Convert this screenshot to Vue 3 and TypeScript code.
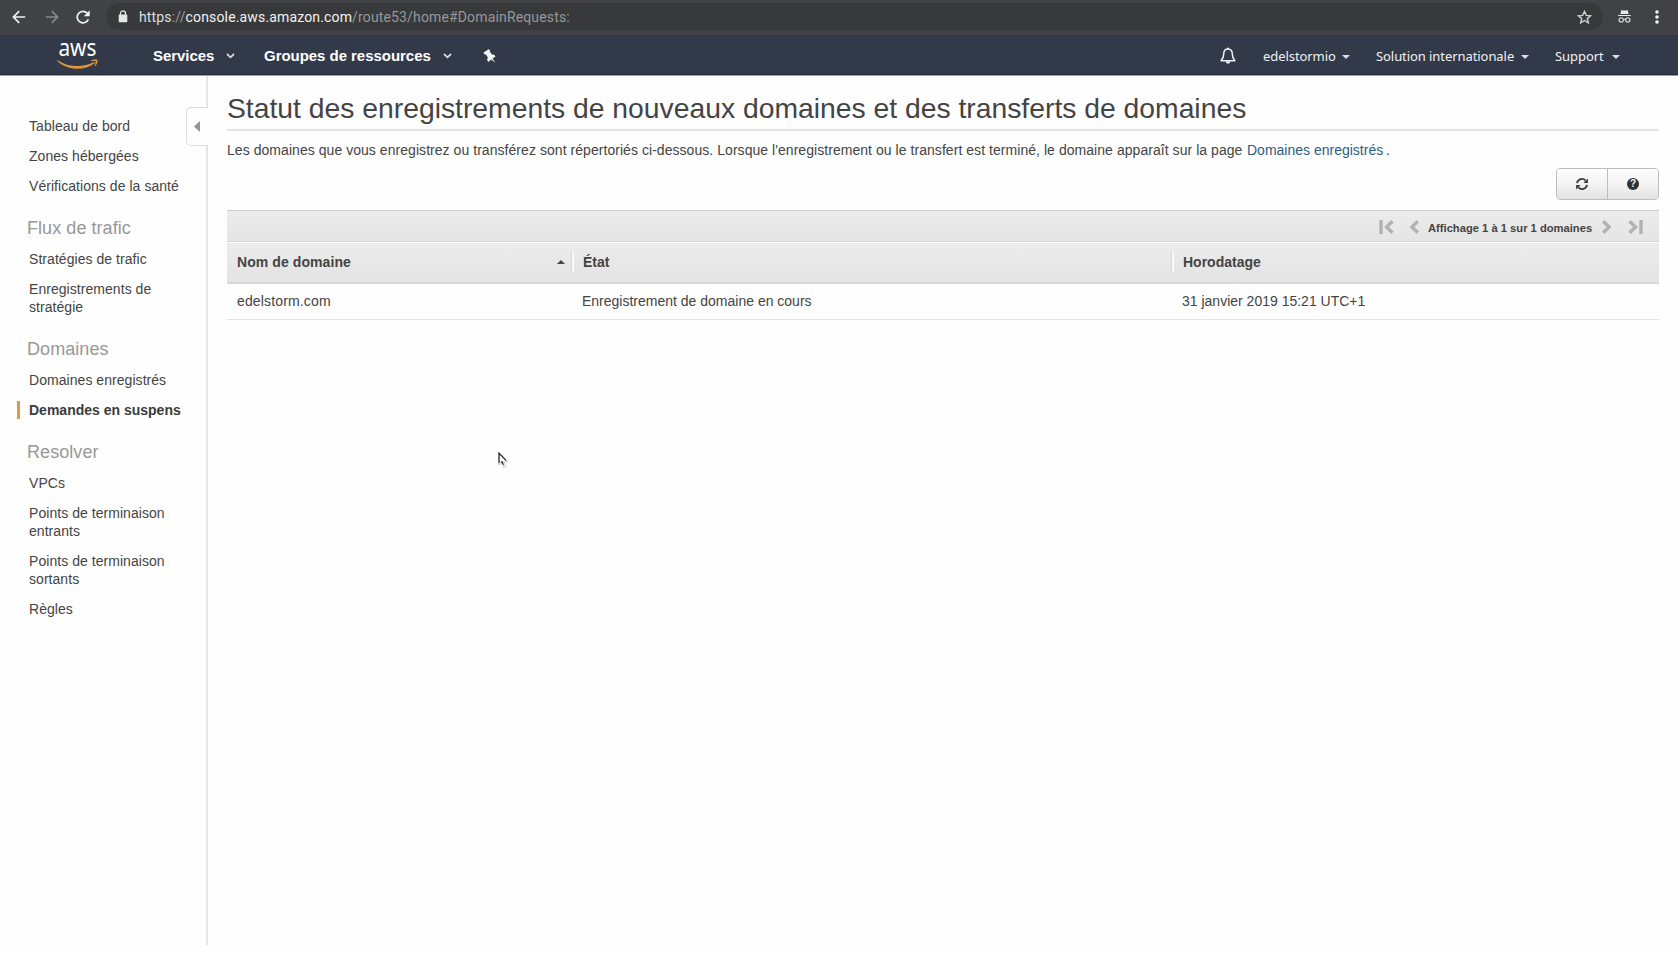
<script setup lang="ts">
interface NavSection {
  title?: string
  items: string[]
}

const activeItem = 'Demandes en suspens'

const sections: NavSection[] = [
  { items: ['Tableau de bord', 'Zones hébergées', 'Vérifications de la santé'] },
  { title: 'Flux de trafic', items: ['Stratégies de trafic', 'Enregistrements de stratégie'] },
  { title: 'Domaines', items: ['Domaines enregistrés', 'Demandes en suspens'] },
  {
    title: 'Resolver',
    items: ['VPCs', 'Points de terminaison entrants', 'Points de terminaison sortants', 'Règles'],
  },
]

const requests = [
  { domain: 'edelstorm.com', status: 'Enregistrement de domaine en cours', time: '31 janvier 2019 15:21 UTC+1' },
]
</script>

<template>
  <div class="page">
    <div class="browser">
      <svg class="b-back" width="14" height="14" viewBox="0 0 14 14" fill="none" stroke="#f1f1f2" stroke-width="1.7"><path d="M13.2 7H1.6M7.2 1.2L1.4 7l5.8 5.8" /></svg>
      <svg class="b-fwd" width="14" height="14" viewBox="0 0 14 14" fill="none" stroke="#88898c" stroke-width="1.7"><path d="M.8 7h11.6M6.8 1.2L12.6 7l-5.8 5.8" /></svg>
      <svg class="b-reload" width="14" height="14" viewBox="0 0 14 14"><path d="M12.400 9.200A5.800 5.800 0 1 1 11.300 3.200" fill="none" stroke="#f1f1f2" stroke-width="1.700" /><path d="M13.700 .3v5.900H7.800z" fill="#f1f1f2" /></svg>
      <div class="omnibox">
        <svg width="10" height="13" viewBox="0 0 10 13"><rect x=".7" y="4.5" width="8.6" height="7.8" rx="1" fill="#e6e6e7" /><path d="M2.5 5V3.4a2.5 2.5 0 0 1 5 0V5" fill="none" stroke="#e6e6e7" stroke-width="1.3" /></svg>
        <span class="url"><span class="lit">https</span>://<span class="host">console.aws.amazon.com</span>/route53/home#DomainRequests:</span>
        <svg class="star" width="15" height="14" viewBox="0 0 15 14" fill="none" stroke="#cfcfd0" stroke-width="1.4"><path d="M7.5 1.4l1.8 4 4.2.4-3.2 2.8 1 4.2-3.8-2.3-3.8 2.3 1-4.2L1.5 5.8l4.2-.4z" /></svg>
      </div>
      <svg class="b-incog" width="13" height="13" viewBox="0 0 13 13"><path d="M3.4 0l1.3.4h3.6L9.6 0l1 4H2.4zM.2 4.9h12.6v1.2H.2z" fill="#e9e9ea" /><g fill="none" stroke="#e0e0e1" stroke-width="1.1"><circle cx="3.2" cy="9.9" r="2.1" /><circle cx="9.8" cy="9.9" r="2.1" /><path d="M5.3 9.5q1.2-.6 2.4 0" /></g></svg>
      <svg class="b-dots" width="4" height="14" viewBox="0 0 4 14" fill="#f4f4f4"><circle cx="2" cy="2" r="1.8" /><circle cx="2" cy="7" r="1.8" /><circle cx="2" cy="12" r="1.8" /></svg>
    </div>

    <header class="topbar">
      <svg class="logo" width="42" height="28" viewBox="0 0 42 28">
        <text x="1.4" y="14.4" textLength="38" lengthAdjust="spacingAndGlyphs">aws</text>
        <path d="M.6 18.2C11 25.3 25.5 25.9 36.5 20.300c.9-.4 1.6.4.8 1.1C27.5 29 10 28.5.2 18.9c-.4-.5 0-.9.4-.7z" fill="#e2953c" />
        <path d="M33.6 18.7c2.2-1.5 6.4-1.5 6.8-.8.5.8-.3 4.5-2.4 6.2-.3.3-.7.1-.5-.3.5-1.2 1.5-3.9 1.100-4.5-.5-.6-3.3-.3-4.7-.1-.5.1-.6-.2-.3-.5z" fill="#e2953c" />
      </svg>
      <span class="menu services">Services</span>
      <svg class="chev c1" width="9" height="6" viewBox="0 0 9 6"><path d="M1 1l3.5 3.3L8 1" /></svg>
      <span class="menu groups">Groupes de ressources</span>
      <svg class="chev c2" width="9" height="6" viewBox="0 0 9 6"><path d="M1 1l3.5 3.3L8 1" /></svg>
      <svg class="pin" width="13" height="14" viewBox="0 0 13 14"><path d="M.5 3.6L5.600.2l1.600 1.300-.5 1.100 2.500 3.100 1.700-.3 1.600 2.200-2.900 2 2.600 4.100-3.900-3.100-3.200 2.300L4 10l1-1.200-2-3.400-1.400.2z" fill="#f3f4f6" /></svg>

      <svg class="bell" width="16" height="18" viewBox="0 0 16 18"><path d="M8 2C4.800 2 3.700 4.400 3.700 7c0 3.600-1 4.900-2.600 6.700h13.800C13.300 11.900 12.300 10.600 12.300 7c0-2.600-1.100-5-4.300-5z" fill="none" stroke="#eef0f3" stroke-width="1.500" stroke-linejoin="round" /><path d="M7 .8h2v1.500H7zM5.600 14.300h4.800a2.400 2.400 0 0 1-4.800 0z" fill="#eef0f3" /></svg>
      <span class="acct a1">edelstormio</span><i class="caret"></i>
      <span class="acct a2">Solution internationale</span><i class="caret"></i>
      <span class="acct a3">Support</span><i class="caret"></i>
    </header>

    <div class="body">
      <nav class="sidebar">
        <div v-for="(s, i) in sections" :key="i">
          <h2 v-if="s.title">{{ s.title }}</h2>
          <a v-for="item in s.items" :key="item" :class="{ active: item === activeItem }">{{ item }}</a>
        </div>
        <div class="toggle"><svg width="6" height="11" viewBox="0 0 6 11"><path d="M6 0v11L0 5.5z" fill="#959595" /></svg></div>
      </nav>

      <main>
        <h1>Statut des enregistrements de nouveaux domaines et des transferts de domaines</h1>
        <p><span class="desc">Les domaines que vous enregistrez ou transférez sont répertoriés ci-dessous. Lorsque l'enregistrement ou le transfert est terminé, le domaine apparaît sur la page</span><a>Domaines enregistrés</a><span>.</span></p>
        <div class="actions">
          <button aria-label="Actualiser">
            <svg width="12" height="12" viewBox="0 0 12 12" fill="none" stroke="#3b3b3b" stroke-width="1.8"><path d="M1 5.1A5 5 0 0 1 9.6 2.6M11 6.9A5 5 0 0 1 2.4 9.4" /><path d="M11.9.4v4.5H7.4zM.1 11.6V7.1h4.5z" fill="#3b3b3b" stroke="none" /></svg>
          </button>
          <button aria-label="Aide"><span class="help">?</span></button>
        </div>

        <div class="pager">
          <svg class="first" width="15" height="14" viewBox="0 0 15 14"><path d="M2 0v14" /><path d="M13.5 1.2L7.5 7l6 5.8" /></svg>
          <svg class="prev" width="9" height="14" viewBox="0 0 9 14"><path d="M7.8 1.2L1.9 7l5.9 5.8" /></svg>
          <span>Affichage 1 à 1 sur 1 domaines</span>
          <svg class="next" width="9" height="14" viewBox="0 0 9 14"><path d="M1.2 1.2L7.1 7l-5.9 5.8" /></svg>
          <svg class="last" width="15" height="14" viewBox="0 0 15 14"><path d="M13 0v14" /><path d="M1.5 1.2L7.5 7l-6 5.8" /></svg>
        </div>
        <div class="row head">
          <div class="cell">Nom de domaine<i class="sort"></i></div>
          <div class="cell">État</div>
          <div class="cell">Horodatage</div>
        </div>
        <div v-for="r in requests" :key="r.domain" class="row data">
          <div class="cell">{{ r.domain }}</div>
          <div class="cell">{{ r.status }}</div>
          <div class="cell">{{ r.time }}</div>
        </div>
      </main>
    </div>

    <svg class="cursor" width="11" height="17" viewBox="0 0 11 17"><path d="M1 1v12l2.8-2.6 2 4.8 2.1-.9-2-4.6h3.7z" fill="#fff" stroke="#b9b9b9" stroke-width=".8" /><path d="M1 11V1l7 7.3M3 10.5l1-.8 1.5 3" fill="none" stroke="#222" stroke-width="1.2" /></svg>
  </div>
</template>

<style>
body {
  background: #fefefe;
  overflow: hidden;
}
</style>

<style scoped>
* {
  box-sizing: border-box;
}
.page {
  position: relative;
  width: 1678px;
  height: 954px;
  overflow: hidden;
  display: flex;
  flex-direction: column;
  background: #fefefe;
  color: #444;
  font: 14px/18px "Liberation Sans", Arial, sans-serif;
}
svg {
  display: block;
  flex: none;
}
.browser {
  flex: none;
  height: 35px;
  display: flex;
  align-items: center;
  padding: 0 19px 2px 12px;
  background: #414246;
}
.b-fwd { margin-left: 19px; }
.b-reload { margin-left: 17px; }
.omnibox {
  margin-left: 16px;
  width: 1497px;
  height: 27px;
  border-radius: 14px;
  background: #38393a;
  display: flex;
  align-items: center;
  padding: 0 11px 0 12px;
}
.url {
  margin-left: 11px;
  font: 14px/20px Roboto, sans-serif;
  letter-spacing: 0.15px;
  color: #96979a;
  white-space: nowrap;
}
.url .lit { color: #dedfe0; }
.url .host { color: #f1f1f2; }
.star { margin-left: auto; }
.b-incog { margin-left: 15px; }
.b-dots { margin-left: auto; }
.topbar {
  flex: none;
  height: 41px;
  display: flex;
  align-items: center;
  padding: 2px 58px 0 57px;
  background: #323949;
  border-bottom: 1px solid #9b9eaa;
  box-shadow: inset 0 -1px #252b3a;
  white-space: nowrap;
}
.logo {
  overflow: visible;
  margin-top: -1px;
}
.logo text {
  font: 24px "Noto Sans", sans-serif;
  fill: #fff;
}
.menu {
  font-weight: 700;
  font-size: 15px;
  letter-spacing: -0.04px;
  color: #fff;
}
.services { margin-left: 54px; width: 62px; }
.groups { margin-left: 29px; width: 167px; }
.chev { fill: none; stroke: #d5d8de; stroke-width: 1.8; }
.c1 { margin-left: 11px; }
.c2 { margin-left: 12px; }
.pin { margin-left: 31px; }
.bell { margin-left: auto; }
.acct {
  font: 13px/18px "Noto Sans", sans-serif;
  letter-spacing: -0.07px;
  color: #f0f1f4;
}
.a1 { margin-left: 27px; width: 71px; }
.a2 { margin-left: 26px; width: 137px; }
.a3 { margin-left: 26px; width: 49px; }
.caret {
  margin: 1px 0 0 8px;
  border: 4px solid transparent;
  border-top: 4px solid #d9dce2;
  border-bottom: 0;
}
.body {
  flex: 1;
  display: flex;
}
.sidebar {
  position: relative;
  width: 208px;
  height: 869px;
  border-right: 2px solid #e6e6e6;
  padding: 35px 24px 0 29px;
}
.sidebar h2 {
  margin: 0 0 0 -2px;
  padding: 16px 0 5px;
  font-size: 18px;
  line-height: 22px;
  font-weight: 400;
  letter-spacing: 0.06px;
  color: #989898;
}
.sidebar a {
  display: block;
  padding: 6px 20px 6px 0;
  margin-right: -10px;
  letter-spacing: 0.05px;
}
.sidebar div > a:nth-child(3) { padding-right: 0; }
.sidebar .active {
  font-weight: 700;
  letter-spacing: 0;
  padding: 0 0 0 9px;
  margin: 6px -10px 6px -12px;
  border-left: 3px solid #d99b45;
  height: 18px;
  color: #3b3b3b;
}
.toggle {
  position: absolute;
  left: 186px;
  top: 31px;
  width: 22px;
  height: 39px;
  border: 1px solid #dcdcdc;
  border-right: 0;
  border-radius: 5px 0 0 5px;
  background: #fefefe;
  display: flex;
  align-items: center;
  padding-left: 7px;
}
main {
  margin-left: 19px;
  width: 1432px;
}
h1 {
  margin: 0;
  height: 55px;
  padding-top: 16px;
  border-bottom: 2px solid #e2e2e2;
  font-size: 28.3px;
  line-height: 32px;
  font-weight: 400;
  white-space: nowrap;
}
p {
  margin: 10px 0 0;
  height: 18px;
  display: flex;
  white-space: nowrap;
}
.desc { width: 1020px; letter-spacing: 0.05px; }
p a { width: 139px; color: #2c5f80; }
.actions {
  margin: 9px 0 0 auto;
  width: 103px;
  height: 32px;
  display: flex;
  border: 1px solid #bdbdbd;
  border-radius: 4px;
  overflow: hidden;
}
.actions button {
  flex: 1;
  padding: 0;
  border: 0;
  display: flex;
  align-items: center;
  justify-content: center;
  background: linear-gradient(#fdfdfd, #f3f3f3 50%, #e2e2e2);
}
.actions button + button { border-left: 1px solid #bdbdbd; }
.help {
  width: 12px;
  height: 12px;
  border-radius: 50%;
  background: #333;
  color: #f4f4f4;
  font: 700 10px/12px "Liberation Sans", sans-serif;
  text-align: center;
}
.pager {
  margin-top: 10px;
  height: 32px;
  border-top: 1px solid #cfcfcf;
  border-bottom: 1px solid #d4d4d4;
  background: linear-gradient(#ececec, #e5e5e5);
  display: flex;
  align-items: center;
  padding: 4px 16px 0 0;
  justify-content: flex-end;
  font-weight: 700;
  font-size: 11.2px;
  white-space: nowrap;
}
.pager span { width: 164px; margin-left: 9px; }
.pager svg { fill: none; stroke: #b2b2b2; stroke-width: 3.4; margin-top: -2px; }
.pager .prev { margin-left: 16px; }
.pager .next { margin-left: 10px; }
.pager .last { margin-left: 17px; }
.row {
  display: grid;
  grid-template-columns: 345px 600px 1fr;
  align-items: center;
}
.head {
  margin-top: 1px;
  height: 41px;
  padding-bottom: 1px;
  border-bottom: 2px solid #d8d8d8;
  background: linear-gradient(#ececec, #e3e3e3);
  font-weight: 700;
}
.cell { padding-left: 10px; }
.head .cell {
  display: flex;
  align-items: center;
  height: 20px;
  padding-left: 9px;
  border-left: 2px solid #fafafa;
  box-shadow: -1px 0 #d6d6d6;
}
.head .cell:first-child {
  padding-left: 10px;
  border: 0;
  box-shadow: none;
  letter-spacing: 0.08px;
}
.sort {
  margin-left: auto;
  margin-right: 7px;
  border: 4px solid transparent;
  border-top: 0;
  border-bottom: 4px solid #444;
}
.data {
  height: 36px;
  padding-bottom: 2px;
  border-bottom: 1px solid #e3e3e3;
}
.data .cell:first-child { letter-spacing: 0.15px; }
.cursor {
  position: absolute;
  left: 498px;
  top: 452px;
}
</style>
